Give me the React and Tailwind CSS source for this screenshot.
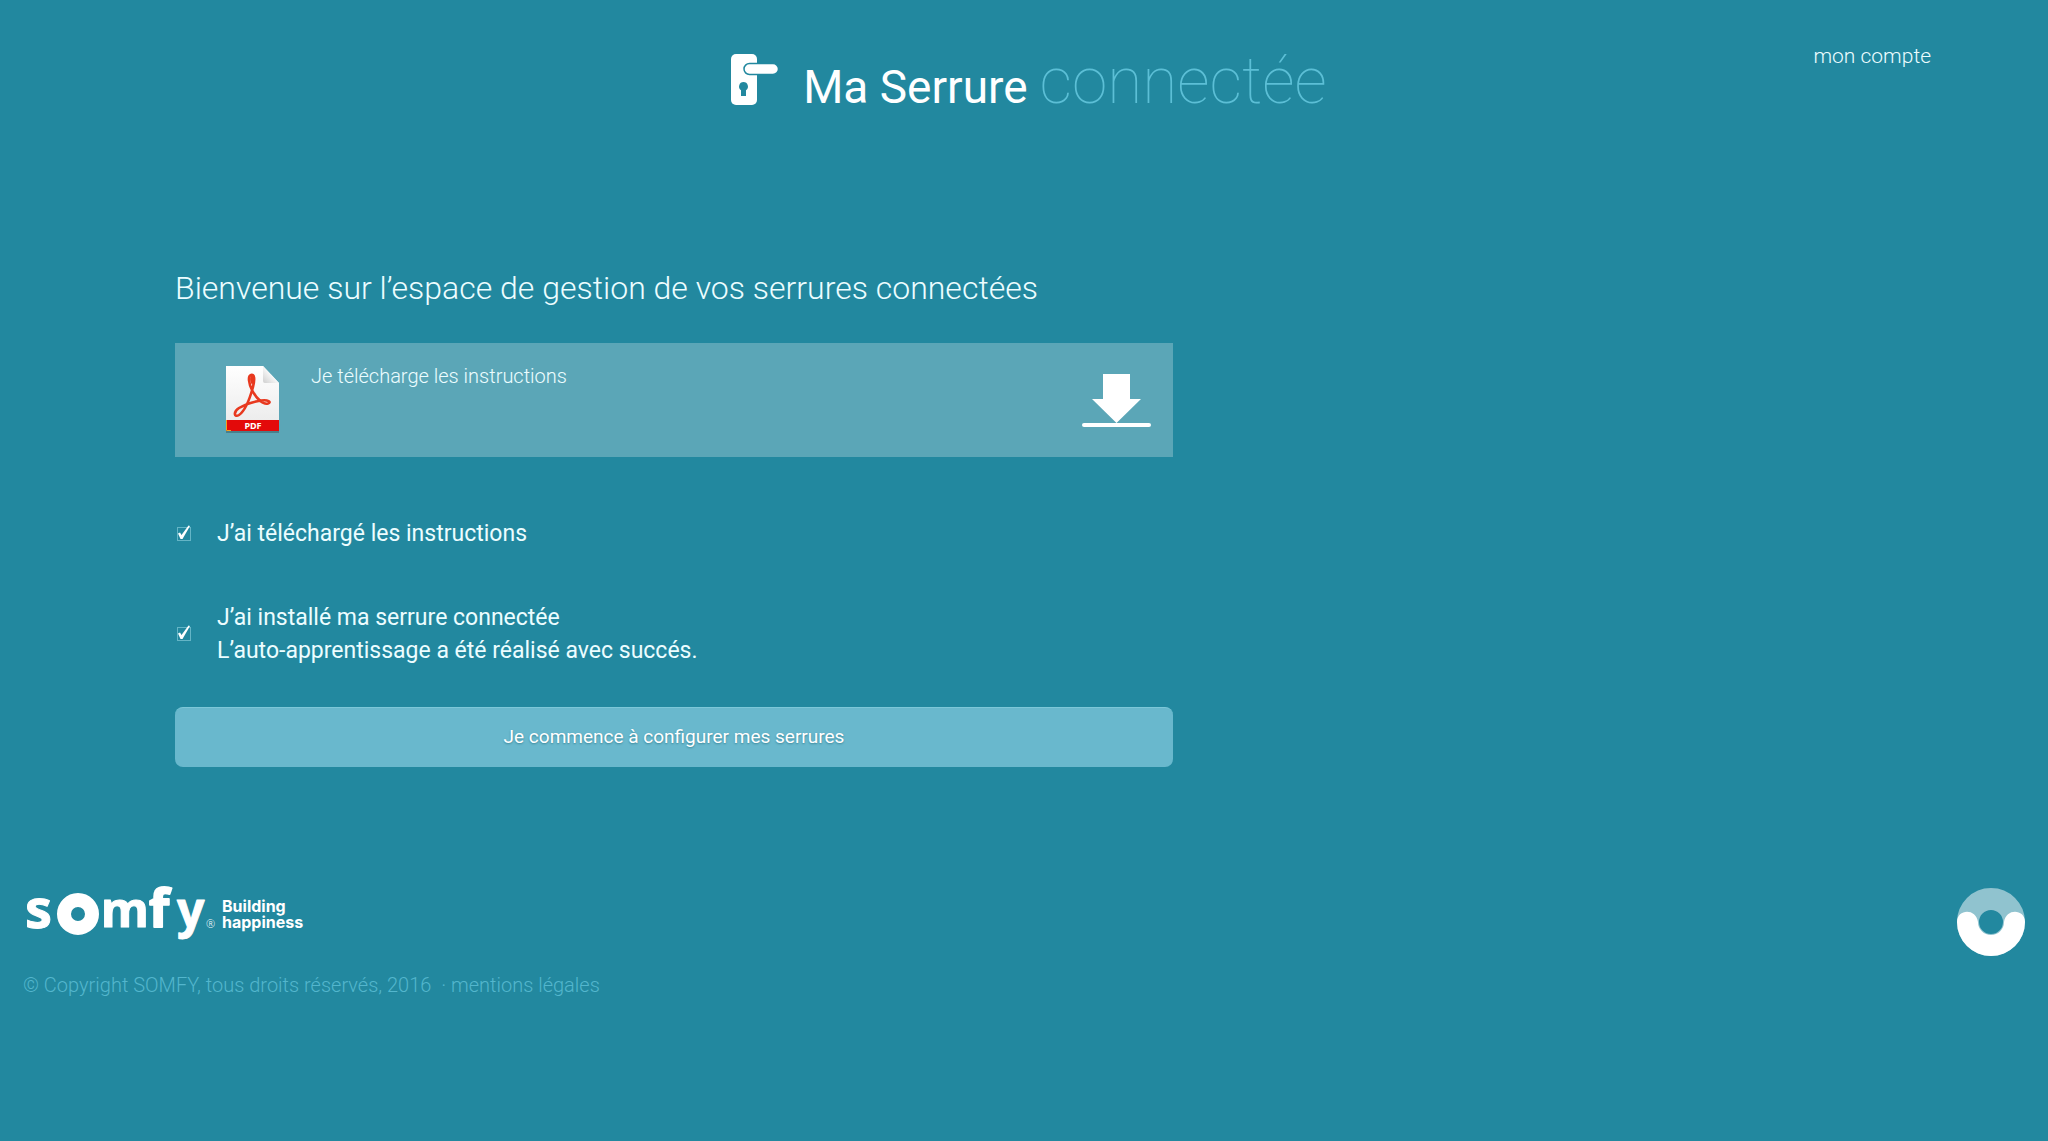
import { useState } from "react";

function LockIcon() {
  return (
    <svg className="mb-2.5" width="48" height="52" viewBox="0 0 48 52" aria-hidden="true">
      <rect x="0" y="0" width="26" height="51" rx="5" fill="#fff" />
      <path
        d="M18.500 9.500 H42 a5.500 5.500 0 0 1 0 11 H18.500 a5.500 5.500 0 0 1 0 -11 z"
        fill="#fff"
        stroke="#22889f"
        strokeWidth="1.500"
      />
      <path
        d="M12.500 28 a4.500 4.500 0 0 1 2.500 8.200 V42 h-5 v-5.800 A4.500 4.500 0 0 1 12.500 28 z"
        fill="#22889f"
      />
    </svg>
  );
}

function PdfIcon() {
  return (
    <svg width="56" height="70" viewBox="0 0 56 70" aria-hidden="true">
      <defs>
        <linearGradient id="sheet" x1="0" y1="0" x2="0" y2="1">
          <stop offset="0" stopColor="#fff" />
          <stop offset="1" stopColor="#e9e9e9" />
        </linearGradient>
        <linearGradient id="corner" x1="0" y1="1" x2="1" y2="0">
          <stop offset="0" stopColor="#cfcfcf" />
          <stop offset="0.600" stopColor="#fff" />
        </linearGradient>
      </defs>
      <path d="M1 66 H54 V68 H1 z" fill="#4a7f8b" />
      <path d="M1 1 H38 L54 18 V66 H1 z" fill="url(#sheet)" />
      <path d="M38 1 L54 18 H40 Q38 18 38 16 z" fill="url(#corner)" />
      <rect x="1" y="55" width="53" height="11" fill="#e30a0a" />
      <path d="M1.500 55 V65.500 H6" fill="none" stroke="#f2a01e" />
      <path
        d="M26 10 C22.500 11 24 19 27 25 C31 33 38 40 43 38.500 C47 37 43 34.500 36 35.500 C27 37 19 40 14 43 C8 47 9 53 14 50 C20 46 25 33 28 22 C30 14 29.500 9 26 10 z"
        fill="none"
        stroke="#e8391f"
        strokeWidth="2.600"
        strokeLinejoin="round"
      />
      <path d="M26 10 C24 14 25.500 18 27.500 20 C29 15 29 10 26 10 z" fill="#e8391f" />
      <text
        x="28"
        y="64"
        textAnchor="middle"
        fontSize="9"
        fontWeight="700"
        fontFamily="Noto Sans, sans-serif"
        fill="#fff"
      >
        PDF
      </text>
    </svg>
  );
}

function DownloadIcon() {
  return (
    <svg width="70" height="56" viewBox="0 -2 70 56" aria-hidden="true">
      <path d="M21 0 H48 V25 H59 L34.500 49 L10 25 H21 z" fill="#fff" />
      <rect x="0" y="49" width="69" height="4" rx="2" fill="#fff" />
    </svg>
  );
}

function SomfyLogo() {
  return (
    <svg
      width="300"
      height="86"
      viewBox="-2 -16 300 86"
      role="img"
      aria-label="Somfy, Building happiness"
      fill="#fff"
    >
      <g fontFamily="Noto Sans, sans-serif" fontWeight="700" stroke="#fff" strokeLinejoin="round">
        <text x="0" y="41" fontSize="54">s</text>
        <text x="76" y="40" fontSize="49">m</text>
        <text x="124" y="40" fontSize="52" strokeWidth="2">f</text>
        <text x="152" y="40" fontSize="48">y</text>
      </g>
      <circle cx="53" cy="27" r="14" fill="none" stroke="#fff" strokeWidth="14" />
      <text x="181" y="41" fontSize="11" fontFamily="Open Sans, sans-serif">®</text>
      <g fontFamily="Inter, sans-serif" fontWeight="700" fontSize="16">
        <text x="197" y="25">Building</text>
        <text x="197" y="41">happiness</text>
      </g>
    </svg>
  );
}

function RingLogo() {
  return (
    <svg width="68" height="70" viewBox="0 0 68 70" aria-hidden="true">
      <circle cx="34" cy="35" r="23" fill="none" stroke="#90c3cf" strokeWidth="22" />
      <path
        d="M0 35 C0 22 19 21 21 35 A13 13 0 0 0 47 35 C49 21 68 22 68 35 A34 34 0 0 1 0 35 z"
        fill="#fff"
      />
    </svg>
  );
}

function CheckLine({ id, checked, onChange, children }) {
  return (
    <div className="flex items-center gap-6">
      <span className="relative flex h-5 w-[18px] items-center">
        <input
          id={id}
          type="checkbox"
          checked={checked}
          onChange={onChange}
          className="ml-0.5 size-3.5 appearance-none border border-[#64b5c6]"
        />
        {checked && (
          <svg
            className="pointer-events-none absolute inset-0"
            width="18"
            height="20"
            viewBox="0 0 18 20"
            aria-hidden="true"
          >
            <path d="M3 9.500 L5 8.500 L6.500 11 L13.500 1.500 L15 2 L7.500 15 L5.500 15 z" fill="#fff" />
          </svg>
        )}
      </span>
      <label htmlFor={id} className="text-[23px] leading-[33px] font-normal">
        {children}
      </label>
    </div>
  );
}

export default function App() {
  const [downloaded, setDownloaded] = useState(true);
  const [installed, setInstalled] = useState(true);

  return (
    <div className="min-h-screen bg-[#22889f] font-['Roboto',sans-serif] font-light text-[#ecfdff]">
      <header className="grid grid-cols-[1fr_auto_1fr] items-start pt-10">
        <div />
        <h1 className="flex items-center gap-6 pt-1 pl-2.5 leading-[76px]">
          <LockIcon />
          <span className="flex items-baseline gap-3 whitespace-nowrap">
            <span className="text-[46px] font-normal text-white">Ma Serrure</span>
            <span className="text-[64px] font-thin text-[#5cbfd6]">connectée</span>
          </span>
        </h1>
        <a href="#compte" className="mr-[117px] justify-self-end text-[21px] leading-8">
          mon compte
        </a>
      </header>

      <main className="mt-[139px] ml-[175px] w-[53.300%] max-w-[998px]">
        <h2 className="text-[32px] leading-12 whitespace-nowrap">
          Bienvenue sur l’espace de gestion de vos serrures connectées
        </h2>

        <a
          href="#instructions"
          className="mt-[31px] flex h-[114px] items-center bg-[#5ba6b7] pr-[21px] pl-[50px]"
        >
          <PdfIcon />
          <span className="ml-[30px] flex-1 self-start pt-[17px] text-xl leading-8">
            Je télécharge les instructions
          </span>
          <DownloadIcon />
        </a>

        <div className="mt-[60px] flex flex-col gap-[51px]">
          <CheckLine
            id="downloaded"
            checked={downloaded}
            onChange={(e) => setDownloaded(e.target.checked)}
          >
            J’ai téléchargé les instructions
          </CheckLine>
          <CheckLine
            id="installed"
            checked={installed}
            onChange={(e) => setInstalled(e.target.checked)}
          >
            J’ai installé ma serrure connectée
            <br />
            L’auto-apprentissage a été réalisé avec succés.
          </CheckLine>
        </div>

        <button
          type="button"
          className="mt-10 h-[60px] w-full rounded-lg border-t border-[#7cc7d8] bg-[#69b8cd] text-[19px] font-normal text-white text-shadow-[0_1px_2px_#3b8799]"
        >
          Je commence à configurer mes serrures
        </button>
      </main>

      <footer className="mt-[104px] px-[23px]">
        <div className="flex items-end justify-between">
          <SomfyLogo />
          <RingLogo />
        </div>
        <p className="mt-3 text-xl leading-8 text-[#53b6cd]">
          © Copyright SOMFY, tous droits réservés, 2016 &nbsp;·{" "}
          <a href="#mentions">mentions légales</a>
        </p>
      </footer>
    </div>
  );
}
